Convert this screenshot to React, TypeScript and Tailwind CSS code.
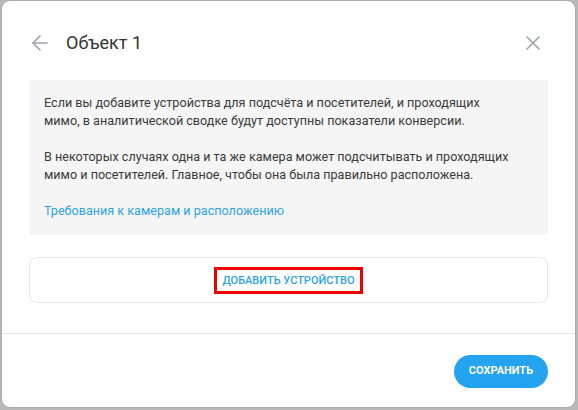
import React from 'react';

const ArrowLeftIcon = () => (
  <svg width="24" height="24" viewBox="0 0 24 24" fill="none" stroke="#9ea3a8" strokeWidth="1.6" strokeLinecap="round" strokeLinejoin="round">
    <path d="M19 12H5" />
    <path d="M12 19l-7-7 7-7" />
  </svg>
);

const CloseIcon = () => (
  <svg width="24" height="24" viewBox="0 0 24 24" fill="none" stroke="#9ea3a8" strokeWidth="1.6" strokeLinecap="round">
    <path d="M18 6 6 18" />
    <path d="M6 6l12 12" />
  </svg>
);

export default function App() {
  return (
    <div className="w-[578px] h-[410px] bg-[#b9b9b9] pt-[1px] pl-[2px] font-['Roboto',sans-serif]">
      <div className="w-[573px] h-[406px] bg-white rounded-[8px] flex flex-col shadow-[0_0_2px_rgba(0,0,0,0.25)]">
        {/* Header */}
        <div className="flex items-center h-[36px] mt-[24px] pl-[26px] pr-[30px]">
          <button className="flex"><ArrowLeftIcon /></button>
          <h1 className="ml-[14px] text-[18px] text-[#333] leading-none">Объект 1</h1>
          <button className="ml-auto flex"><CloseIcon /></button>
        </div>

        <div className="px-[27px] mt-[19px]">
          {/* Info */}
          <div className="bg-[#f5f5f5] rounded-[4px] pl-[15px] pr-[15px] pt-[14px] pb-[15px] text-[12.6px] leading-[18px] text-[#3a3a3a]">
            <p>Если вы добавите устройства для подсчёта и посетителей, и проходящих<br />мимо, в аналитической сводке будут доступны показатели конверсии.</p>
            <p className="mt-[18px]">В некоторых случаях одна и та же камера может подсчитывать и проходящих<br />мимо и посетителей. Главное, чтобы она была правильно расположена.</p>
            <a className="block mt-[18px] text-[#2ea3e3]">Требования к камерам и расположению</a>
          </div>

          {/* Add device */}
          <div className="mt-[22px] h-[46px] border border-[#e6e6e6] rounded-[8px] flex items-center justify-center">
            <button className="border-[3px] border-[#ee0000] px-[5px] h-[27px] text-[11px] font-medium uppercase text-[#2ea3e3] leading-none">
              Добавить устройство
            </button>
          </div>
        </div>

        <div className="mt-[30px] h-px bg-[#e6e6e6]" />

        <div className="flex justify-end px-[27px] mt-[21px]">
          <button className="w-[94px] h-[33px] rounded-full bg-[#23a3f0] text-white text-[11px] font-bold uppercase">
            Сохранить
          </button>
        </div>
      </div>
    </div>
  );
}
